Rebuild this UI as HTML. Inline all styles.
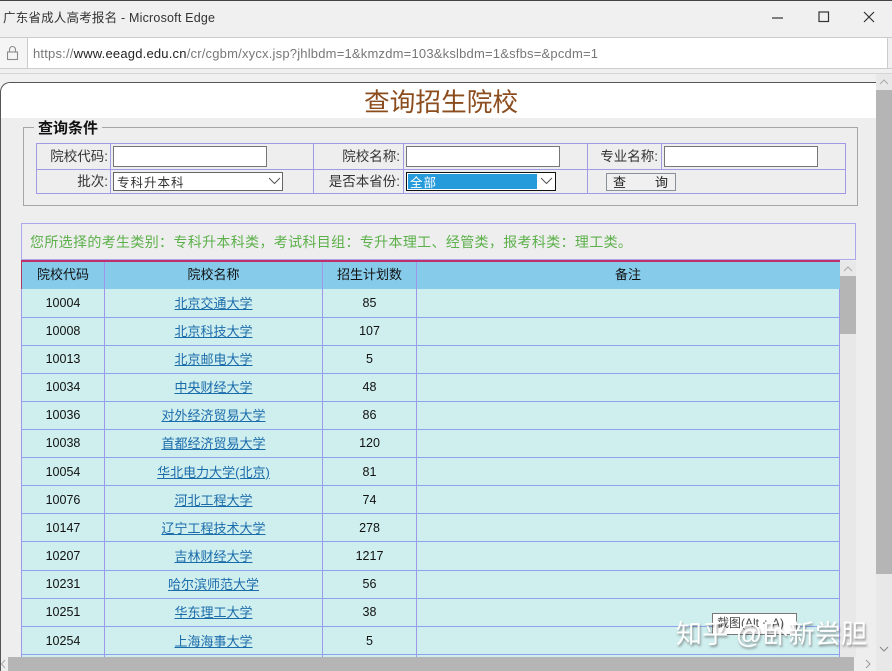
<!DOCTYPE html>
<html><head><meta charset="utf-8">
<style>
html,body{margin:0;padding:0}
body{width:892px;height:671px;overflow:hidden;position:relative;background:#f0f0f0;font-family:"Liberation Sans","Noto Sans CJK SC",sans-serif;color:#222}
.a{position:absolute;box-sizing:border-box}
.t{position:absolute;white-space:nowrap;line-height:20px;font-size:13px}
.c{text-align:center}
.r{text-align:right}
.lv{position:absolute;width:1px;background:#a09ae6}
.lh{position:absolute;height:1px;background:#a09ae6}
.tv{position:absolute;width:1px;background:#9d98ea}
.tlh{position:absolute;left:22px;width:818px;height:1px;background:#8ea2ee}
.l{font-size:13.5px;color:#333}
.n{font-size:12.5px;color:#111}
a{color:#1b6cab;text-decoration:underline}
.in{position:absolute;box-sizing:border-box;background:#fff;border:1px solid #767676}
</style></head><body>

<div class="a" style="left:0;top:0;width:892px;height:1px;background:#444"></div>
<div class="t" style="left:3px;top:8px;font-size:12.5px;color:#333;letter-spacing:.2px">广东省成人高考报名 - Microsoft Edge</div>
<svg class="a" style="left:770px;top:8px" width="115" height="20" viewBox="0 0 115 20" fill="none" stroke="#333" stroke-width="1.2">
<path d="M2 10H13"/><rect x="49" y="4" width="9.5" height="9.5"/><path d="M94 4L104 14M104 4L94 14"/></svg>

<div class="a" style="left:0;top:37px;width:892px;height:1px;background:#ccc"></div>
<div class="a" style="left:0;top:68px;width:892px;height:1px;background:#ccc"></div>
<div class="a" style="left:0;top:73px;width:892px;height:1px;background:#d5d5d5"></div>
<div class="a" style="left:0;top:38px;width:27px;height:30px;background:#f5f5f5"></div>
<div class="a" style="left:27px;top:37px;width:861px;height:32px;background:#fff;border:1px solid #ccc"></div>
<svg class="a" style="left:6px;top:45px" width="14" height="16" viewBox="0 0 14 16" fill="none" stroke="#8a8a8a" stroke-width="1.1">
<rect x="1.5" y="7" width="10" height="7.5"/><path d="M3.5 7V4.5a3 3 0 0 1 6 0V7"/></svg>
<div class="t" style="left:33px;top:44px;font-size:13px;color:#777;letter-spacing:.2px">https://<span style="color:#222">www.eeagd.edu.cn</span>/cr/cgbm/xycx.jsp?jhlbdm=1&amp;kmzdm=103&amp;kslbdm=1&amp;sfbs=&amp;pcdm=1</div>

<!-- page -->
<div class="a" style="left:0;top:82px;width:876px;height:36px;background:#fff;border:1px solid #555;border-bottom:0;border-right:0;border-top-left-radius:10px"></div>
<div class="a" style="left:0;top:118px;width:876px;height:553px;background:#eeeeee;border-left:1px solid #555"></div>
<div class="t" style="left:364px;top:87px;font-size:25.7px;line-height:32px;color:#8b4c1e">查询招生院校</div>

<!-- outer scrollbar -->
<div class="a" style="left:876px;top:74px;width:16px;height:597px;background:#e8e8e8"></div>
<svg class="a" style="left:876px;top:74px" width="16" height="16" fill="none" stroke="#aaa"><path d="M4 10L8 6L12 10"/></svg>
<div class="a" style="left:876px;top:90px;width:16px;height:484px;background:#b5b5b5"></div>

<!-- fieldset -->
<div class="a" style="left:23px;top:127px;width:835px;height:79px;border:1px solid #a6a6a6"></div>
<div class="t" style="left:34px;top:119px;font-size:15px;font-weight:bold;color:#111;background:#eee;padding:0 4px">查询条件</div>

<div class="lh" style="left:36px;top:143px;width:810px"></div>
<div class="lh" style="left:36px;top:169px;width:810px"></div>
<div class="lh" style="left:36px;top:193px;width:810px"></div>
<div class="lv" style="left:36px;top:143px;height:51px"></div>
<div class="lv" style="left:110px;top:143px;height:51px"></div>
<div class="lv" style="left:313px;top:143px;height:51px"></div>
<div class="lv" style="left:403px;top:143px;height:51px"></div>
<div class="lv" style="left:587px;top:143px;height:51px"></div>
<div class="lv" style="left:661px;top:143px;height:26px"></div>
<div class="lv" style="left:845px;top:143px;height:51px"></div>

<div class="t r l" style="left:40px;width:68px;top:147px">院校代码:</div>
<div class="t r l" style="left:40px;width:68px;top:172px">批次:</div>
<div class="t r l" style="left:320px;width:80px;top:147px">院校名称:</div>
<div class="t r l" style="left:320px;width:80px;top:172px">是否本省份:</div>
<div class="t r l" style="left:590px;width:68px;top:147px">专业名称:</div>

<div class="in" style="left:113px;top:146px;width:154px;height:21px"></div>
<div class="in" style="left:406px;top:146px;width:154px;height:21px"></div>
<div class="in" style="left:664px;top:146px;width:154px;height:21px"></div>

<div class="in" style="left:113px;top:172px;width:170px;height:19px;border-color:#666"></div>
<div class="t" style="left:117px;top:173px;font-size:12.5px;letter-spacing:1px;color:#333">专科升本科</div>
<svg class="a" style="left:268px;top:176px" width="13" height="10" fill="none" stroke="#555"><path d="M1 2L6.5 7.5L12 2"/></svg>

<div class="in" style="left:406px;top:172px;width:150px;height:19px;border-color:#111"></div>
<div class="a" style="left:408px;top:174px;width:129px;height:15px;background:#259bdc"></div>
<div class="t" style="left:410px;top:173px;font-size:12.5px;letter-spacing:1px;color:#fff">全部</div>
<svg class="a" style="left:540px;top:176px" width="13" height="10" fill="none" stroke="#555"><path d="M1 2L6.5 7.5L12 2"/></svg>

<div class="a" style="left:606px;top:173px;width:70px;height:18px;background:#f0f0f0;border:1px solid #8a8f9c"></div>
<div class="t" style="left:613px;top:173px">查</div>
<div class="t" style="left:655px;top:173px">询</div>

<!-- notice -->
<div class="a" style="left:21px;top:223px;width:835px;height:37px;border:1px solid #aca6ea"></div>
<div class="t" style="left:30px;top:232px;font-size:14px;letter-spacing:.34px;color:#5cb04a">您所选择的考生类别：专科升本科类，考试科目组：专升本理工、经管类，报考科类：理工类。</div>

<!-- table -->
<div class="a" style="left:22px;top:261px;width:818px;height:28px;background:#86cbea"></div>
<div class="a" style="left:22px;top:289px;width:818px;height:368px;background:#cfeeee"></div>
<div class="a" style="left:21px;top:260px;width:819px;height:2px;background:#c0306a"></div>
<div class="a" style="left:21px;top:260px;width:1px;height:29px;background:#b03a60"></div>
<div class="a" style="left:21px;top:289px;width:1px;height:368px;background:#9d98ea"></div>
<div class="tv" style="left:104px;top:262px;height:395px"></div>
<div class="tv" style="left:322px;top:262px;height:395px"></div>
<div class="tv" style="left:416px;top:262px;height:395px"></div>
<div class="tv" style="left:839px;top:289px;height:368px"></div>

<div class="t c" style="left:22px;width:82px;top:265px;color:#111">院校代码</div>
<div class="t c" style="left:105px;width:217px;top:265px;color:#111">院校名称</div>
<div class="t c" style="left:323px;width:93px;top:265px;color:#111">招生计划数</div>
<div class="t c" style="left:417px;width:422px;top:265px;color:#111">备注</div>

<div class="tlh" style="top:317px"></div><div class="tlh" style="top:345px"></div><div class="tlh" style="top:373px"></div><div class="tlh" style="top:401px"></div><div class="tlh" style="top:429px"></div><div class="tlh" style="top:457px"></div><div class="tlh" style="top:485px"></div><div class="tlh" style="top:513px"></div><div class="tlh" style="top:541px"></div><div class="tlh" style="top:570px"></div><div class="tlh" style="top:598px"></div><div class="tlh" style="top:626px"></div><div class="tlh" style="top:654px"></div>

<div class="t c n" style="left:22px;width:82px;top:293px">10004</div><div class="t c" style="left:105px;width:217px;top:294px"><a>北京交通大学</a></div><div class="t c n" style="left:323px;width:93px;top:293px">85</div>
<div class="t c n" style="left:22px;width:82px;top:321px">10008</div><div class="t c" style="left:105px;width:217px;top:322px"><a>北京科技大学</a></div><div class="t c n" style="left:323px;width:93px;top:321px">107</div>
<div class="t c n" style="left:22px;width:82px;top:349px">10013</div><div class="t c" style="left:105px;width:217px;top:350px"><a>北京邮电大学</a></div><div class="t c n" style="left:323px;width:93px;top:349px">5</div>
<div class="t c n" style="left:22px;width:82px;top:377px">10034</div><div class="t c" style="left:105px;width:217px;top:378px"><a>中央财经大学</a></div><div class="t c n" style="left:323px;width:93px;top:377px">48</div>
<div class="t c n" style="left:22px;width:82px;top:405px">10036</div><div class="t c" style="left:105px;width:217px;top:406px"><a>对外经济贸易大学</a></div><div class="t c n" style="left:323px;width:93px;top:405px">86</div>
<div class="t c n" style="left:22px;width:82px;top:433px">10038</div><div class="t c" style="left:105px;width:217px;top:434px"><a>首都经济贸易大学</a></div><div class="t c n" style="left:323px;width:93px;top:433px">120</div>
<div class="t c n" style="left:22px;width:82px;top:462px">10054</div><div class="t c" style="left:105px;width:217px;top:463px"><a>华北电力大学(北京)</a></div><div class="t c n" style="left:323px;width:93px;top:462px">81</div>
<div class="t c n" style="left:22px;width:82px;top:490px">10076</div><div class="t c" style="left:105px;width:217px;top:491px"><a>河北工程大学</a></div><div class="t c n" style="left:323px;width:93px;top:490px">74</div>
<div class="t c n" style="left:22px;width:82px;top:518px">10147</div><div class="t c" style="left:105px;width:217px;top:519px"><a>辽宁工程技术大学</a></div><div class="t c n" style="left:323px;width:93px;top:518px">278</div>
<div class="t c n" style="left:22px;width:82px;top:546px">10207</div><div class="t c" style="left:105px;width:217px;top:547px"><a>吉林财经大学</a></div><div class="t c n" style="left:323px;width:93px;top:546px">1217</div>
<div class="t c n" style="left:22px;width:82px;top:574px">10231</div><div class="t c" style="left:105px;width:217px;top:575px"><a>哈尔滨师范大学</a></div><div class="t c n" style="left:323px;width:93px;top:574px">56</div>
<div class="t c n" style="left:22px;width:82px;top:602px">10251</div><div class="t c" style="left:105px;width:217px;top:603px"><a>华东理工大学</a></div><div class="t c n" style="left:323px;width:93px;top:602px">38</div>
<div class="t c n" style="left:22px;width:82px;top:631px">10254</div><div class="t c" style="left:105px;width:217px;top:632px"><a>上海海事大学</a></div><div class="t c n" style="left:323px;width:93px;top:631px">5</div>

<!-- inner scrollbar -->
<div class="a" style="left:840px;top:261px;width:16px;height:396px;background:#e8e8e8"></div>
<svg class="a" style="left:840px;top:261px" width="16" height="15" fill="none" stroke="#aaa"><path d="M4 10L8 6L12 10"/></svg>
<div class="a" style="left:840px;top:276px;width:16px;height:58px;background:#b5b5b5"></div>

<!-- bottom scrollbar -->
<div class="a" style="left:8px;top:657px;width:846px;height:14px;background:#b5b5b5"></div>
<svg class="a" style="left:0;top:657px" width="8" height="14" fill="none" stroke="#aaa"><path d="M5 3L1.5 7L5 11"/></svg>
<svg class="a" style="left:862px;top:657px" width="12" height="14" fill="none" stroke="#999"><path d="M4 3L8 7L4 11"/></svg>
<svg class="a" style="left:876px;top:642px" width="16" height="14" fill="none" stroke="#888"><path d="M4 5L8 9L12 5"/></svg>

<!-- tooltip + watermark -->
<div class="a" style="left:712px;top:613px;width:85px;height:22px;background:#fff;border:1px solid #777"></div>
<div class="t" style="left:717px;top:613px;font-size:12px;color:#444">截图(Alt + A)</div>
<div class="t" style="left:676px;top:619px;font-size:26px;line-height:30px;color:#fff;text-shadow:1px 2px 2px rgba(70,70,70,.55);letter-spacing:.2px">知乎 @卧新尝胆</div>

</body></html>
